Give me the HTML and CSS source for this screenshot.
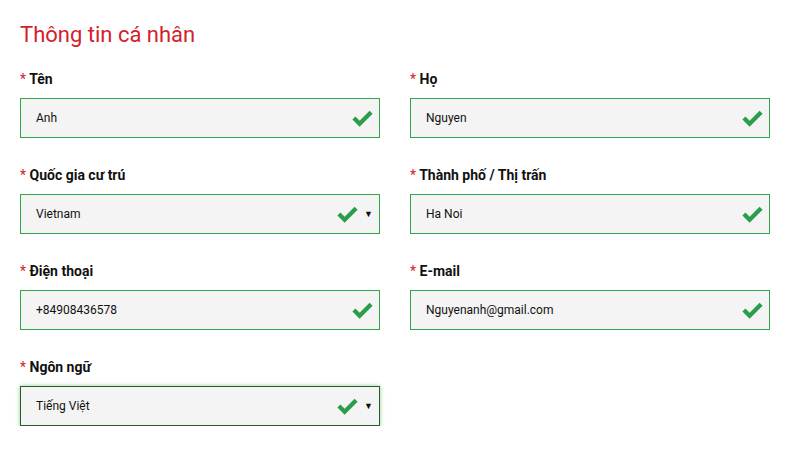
FILE: index.html
```html
<!DOCTYPE html>
<html lang="vi">
<head>
	<meta charset="UTF-8">
	<title>Thông tin cá nhân</title>
	<link rel="stylesheet" href="styles.css">
</head>
<body>
	<div id="title">Thông tin cá nhân</div>
	<div id="form">
		<div class="field">
			<div class="label"><span class="req">*</span> Tên</div>
			<div class="box"><span class="val">Anh</span><svg class="ok" viewBox="0 0 22 18"><polyline points="2,9 8,15 20,3"/></svg></div>
		</div>
		<div class="field">
			<div class="label"><span class="req">*</span> Họ</div>
			<div class="box"><span class="val">Nguyen</span><svg class="ok" viewBox="0 0 22 18"><polyline points="2,9 8,15 20,3"/></svg></div>
		</div>
		<div class="field">
			<div class="label"><span class="req">*</span> Quốc gia cư trú</div>
			<div class="box sel"><span class="val">Vietnam</span><svg class="ok" viewBox="0 0 22 18"><polyline points="2,9 8,15 20,3"/></svg><span class="arrow">▼</span></div>
		</div>
		<div class="field">
			<div class="label"><span class="req">*</span> Thành phố / Thị trấn</div>
			<div class="box"><span class="val">Ha Noi</span><svg class="ok" viewBox="0 0 22 18"><polyline points="2,9 8,15 20,3"/></svg></div>
		</div>
		<div class="field">
			<div class="label"><span class="req">*</span> Điện thoại</div>
			<div class="box"><span class="val">+84908436578</span><svg class="ok" viewBox="0 0 22 18"><polyline points="2,9 8,15 20,3"/></svg></div>
		</div>
		<div class="field">
			<div class="label"><span class="req">*</span> E-mail</div>
			<div class="box"><span class="val">Nguyenanh@gmail.com</span><svg class="ok" viewBox="0 0 22 18"><polyline points="2,9 8,15 20,3"/></svg></div>
		</div>
		<div class="field">
			<div class="label"><span class="req">*</span> Ngôn ngữ</div>
			<div class="box sel focus"><span class="val">Tiếng Việt</span><svg class="ok" viewBox="0 0 22 18"><polyline points="2,9 8,15 20,3"/></svg><span class="arrow">▼</span></div>
		</div>
	</div>
</body>
</html>
```

FILE: styles.css
```css
*{
	margin: 0;
	padding: 0;
	box-sizing: border-box;
	font-family: Roboto, "Liberation Sans", Arial, sans-serif;
}
body{
	background-color: #fff;
	color: #111;
}
#title{
	margin-top: 22px;
	margin-left: 20px;
	font-size: 22px;
	line-height: 26px;
	color: #d4202c;
}
#form{
	display: grid;
	grid-template-columns: 360px 360px;
	column-gap: 30px;
	row-gap: 29px;
	margin-top: 23px;
	margin-left: 20px;
}
.label{
	font-size: 14px;
	font-weight: bold;
	line-height: 16px;
	margin-bottom: 11px;
	color: #111;
}
.req{
	color: #d4202c;
	font-weight: normal;
}
.box{
	display: flex;
	align-items: center;
	height: 40px;
	padding: 0 6px 0 15px;
	background-color: #f4f4f4;
	border: 1px solid #2ea64a;
}
.val{
	flex: 1;
	font-size: 12px;
	color: #111;
}
.ok{
	width: 21px;
	height: 18px;
}
.ok polyline{
	fill: none;
	stroke: #2a9d48;
	stroke-width: 4.5;
}
.sel .ok{
	margin-right: 6px;
}
.arrow{
	font-size: 9px;
	color: #111;
}
.focus{
	border-color: #2b5a2b;
	box-shadow: 0 0 4px rgba(60,170,60,0.6);
}
```
